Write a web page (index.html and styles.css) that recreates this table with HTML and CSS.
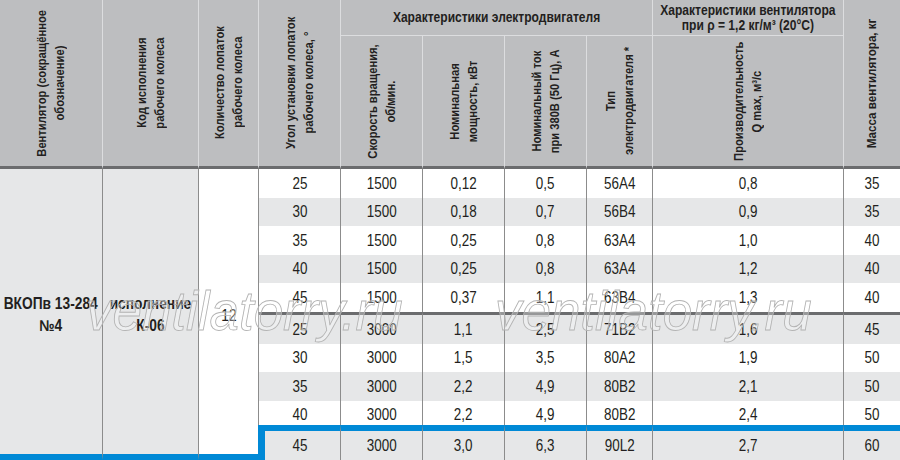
FILE: index.html
```html
<!DOCTYPE html>
<html lang="ru">
<head>
<meta charset="utf-8">
<title>ВКОПв 13-284 №4</title>
<link rel="stylesheet" href="styles.css">
</head>
<body>
<div class="page">
  <div class="tbl">
    <div class="h tall c1"><span class="v">Вентилятор (сокращённое<br>обозначение)</span></div>
    <div class="h tall c2"><span class="v">Код исполнения<br>рабочего колеса</span></div>
    <div class="h tall c3"><span class="v">Количество лопаток<br>рабочего колеса</span></div>
    <div class="h tall c4"><span class="v">Угол установки лопаток<br>рабочего колеса, °</span></div>
    <div class="h top c58"><span class="t">Характеристики электродвигателя</span></div>
    <div class="h top c9"><span class="t">Характеристики вентилятора<br>при ρ = 1,2 кг/м³ (20°C)</span></div>
    <div class="h tall c10"><span class="v">Масса вентилятора, кг</span></div>
    <div class="h sub c5"><span class="v">Скорость вращения,<br>об/мин.</span></div>
    <div class="h sub c6"><span class="v">Номинальная<br>мощность, кВт</span></div>
    <div class="h sub c7"><span class="v">Номинальный ток<br>при 380В (50 Гц), А</span></div>
    <div class="h sub c8"><span class="v">Тип<br>электродвигателя *</span></div>
    <div class="h sub c9b"><span class="v">Производительность<br>Q max, м³/с</span></div>

    <div class="lft l1"><span class="t">ВКОПв 13-284<br>№4</span></div>
    <div class="lft l2"><span class="t">исполнение<br>К-06</span></div>
    <div class="lft l3"><span class="t">12</span></div>

    <div class="r"><div><span>25</span></div><div><span>1500</span></div><div><span>0,12</span></div><div><span>0,5</span></div><div><span>56A4</span></div><div><span>0,8</span></div><div><span>35</span></div></div>
    <div class="r g"><div><span>30</span></div><div><span>1500</span></div><div><span>0,18</span></div><div><span>0,7</span></div><div><span>56B4</span></div><div><span>0,9</span></div><div><span>35</span></div></div>
    <div class="r"><div><span>35</span></div><div><span>1500</span></div><div><span>0,25</span></div><div><span>0,8</span></div><div><span>63A4</span></div><div><span>1,0</span></div><div><span>40</span></div></div>
    <div class="r g"><div><span>40</span></div><div><span>1500</span></div><div><span>0,25</span></div><div><span>0,8</span></div><div><span>63A4</span></div><div><span>1,2</span></div><div><span>40</span></div></div>
    <div class="r"><div><span>45</span></div><div><span>1500</span></div><div><span>0,37</span></div><div><span>1,1</span></div><div><span>63B4</span></div><div><span>1,3</span></div><div><span>40</span></div></div>
    <div class="r g sep"><div><span>25</span></div><div><span>3000</span></div><div><span>1,1</span></div><div><span>2,5</span></div><div><span>71B2</span></div><div><span>1,6</span></div><div><span>45</span></div></div>
    <div class="r"><div><span>30</span></div><div><span>3000</span></div><div><span>1,5</span></div><div><span>3,5</span></div><div><span>80A2</span></div><div><span>1,9</span></div><div><span>50</span></div></div>
    <div class="r g"><div><span>35</span></div><div><span>3000</span></div><div><span>2,2</span></div><div><span>4,9</span></div><div><span>80B2</span></div><div><span>2,1</span></div><div><span>50</span></div></div>
    <div class="r pre"><div><span>40</span></div><div><span>3000</span></div><div><span>2,2</span></div><div><span>4,9</span></div><div><span>80B2</span></div><div><span>2,4</span></div><div><span>50</span></div></div>
    <div class="r g sel"><div><span>45</span></div><div><span>3000</span></div><div><span>3,0</span></div><div><span>6,3</span></div><div><span>90L2</span></div><div><span>2,7</span></div><div><span>60</span></div></div>
  </div>
  <div class="wm wm1">ventilatorry.ru</div>
  <div class="wm wm2">ventilatorry.ru</div>
</div>
</body>
</html>
```
FILE: styles.css
```css
html, body {
  margin: 0;
  padding: 0;
  background: #ffffff;
}

.page {
  position: relative;
  width: 900px;
  height: 460px;
  overflow: hidden;
  color: #231f20;
  font-family: "Liberation Sans", Arial, sans-serif;
}

.tbl {
  display: grid;
  width: 900px;
  grid-template-columns: 103px 96px 59px 83px 82px 82px 82px 66px 191px 56px;
  grid-template-rows: 36px 133px 29px 28px 29px 28px 29px 32px 28px 29px 24px 35px;
}

/* condensed text helpers */
.t {
  display: inline-block;
  white-space: nowrap;
  transform: scaleX(0.86);
}
.v {
  display: inline-block;
  writing-mode: vertical-rl;
  white-space: nowrap;
  line-height: 18px;
  transform: rotate(180deg) scaleY(0.86);
}

/* header */
.h {
  background: #bdbec0;
  border-right: 1px solid #dcdddf;
  display: flex;
  align-items: center;
  justify-content: center;
  text-align: center;
  font-weight: bold;
  font-size: 13px;
  line-height: 15px;
  box-sizing: border-box;
}
.tall { grid-row: 1 / 3; border-bottom: 3px solid #6b6c6e; }
.top  { grid-row: 1; border-bottom: 1px solid #dcdddf; font-size: 14px; }
.sub  { grid-row: 2; border-bottom: 3px solid #6b6c6e; }

.c1  { grid-column: 1; }
.c2  { grid-column: 2; }
.c3  { grid-column: 3; border-right: 0; }
.c4  { grid-column: 4; border-left: 1px solid #dcdddf; }
.c58 { grid-column: 5 / 9; }
.c9  { grid-column: 9; }
.c10 { grid-column: 10; border-right: 0; font-size: 13.5px; }
.c5  { grid-column: 5; }
.c6  { grid-column: 6; }
.c7  { grid-column: 7; }
.c8  { grid-column: 8; }
.c9b { grid-column: 9; }

/* left merged block */
.lft {
  grid-row: 3 / 13;
  display: flex;
  align-items: center;
  justify-content: center;
  text-align: center;
  border-bottom: 6px solid #0089d6;
  font-size: 16px;
  line-height: 22px;
  box-sizing: border-box;
}
.l1 { grid-column: 1; background: #e6e7e8; border-right: 1px solid #8c8c8c; font-weight: bold; padding-top: 7px; }
.l2 { grid-column: 2; background: #e6e7e8; border-right: 1px solid #8c8c8c; font-weight: bold; padding-top: 7px; }
.l3 { grid-column: 3; background: #ffffff; padding-top: 9px; }

/* data rows */
.r { display: contents; }
.r > div {
  display: flex;
  align-items: center;
  justify-content: center;
  border-right: 1px solid #8c8c8c;
  font-size: 16px;
  background: #ffffff;
}
.r > div > span {
  display: inline-block;
  white-space: nowrap;
  transform: scaleX(0.84);
}
.r > div:first-child { border-left: 1px solid #8c8c8c; }
.r > div:last-child { border-right: 0; }
.r.g > div { background: #e6e7e8; }
.r.sep > div { border-top: 3px solid #6b6c6e; }
.r.pre > div { padding-top: 4px; }
.r.sel > div { border-top: 6px solid #0089d6; }
.r.sel > div:first-child {
  border-left-color: #0089d6;
  box-shadow: inset 6px 0 0 #0089d6;
}

/* watermark overlay */
.wm {
  position: absolute;
  top: 283px;
  font-family: "Liberation Sans", Arial, sans-serif;
  font-style: italic;
  font-size: 56px;
  line-height: 56px;
  color: rgba(255, 255, 255, 0.3);
  -webkit-text-stroke: 0.9px #b3b3b3;
  transform: scaleX(0.945);
  transform-origin: left top;
  white-space: nowrap;
  pointer-events: none;
}
.wm1 { left: 86px; }
.wm2 { left: 495px; }
```
